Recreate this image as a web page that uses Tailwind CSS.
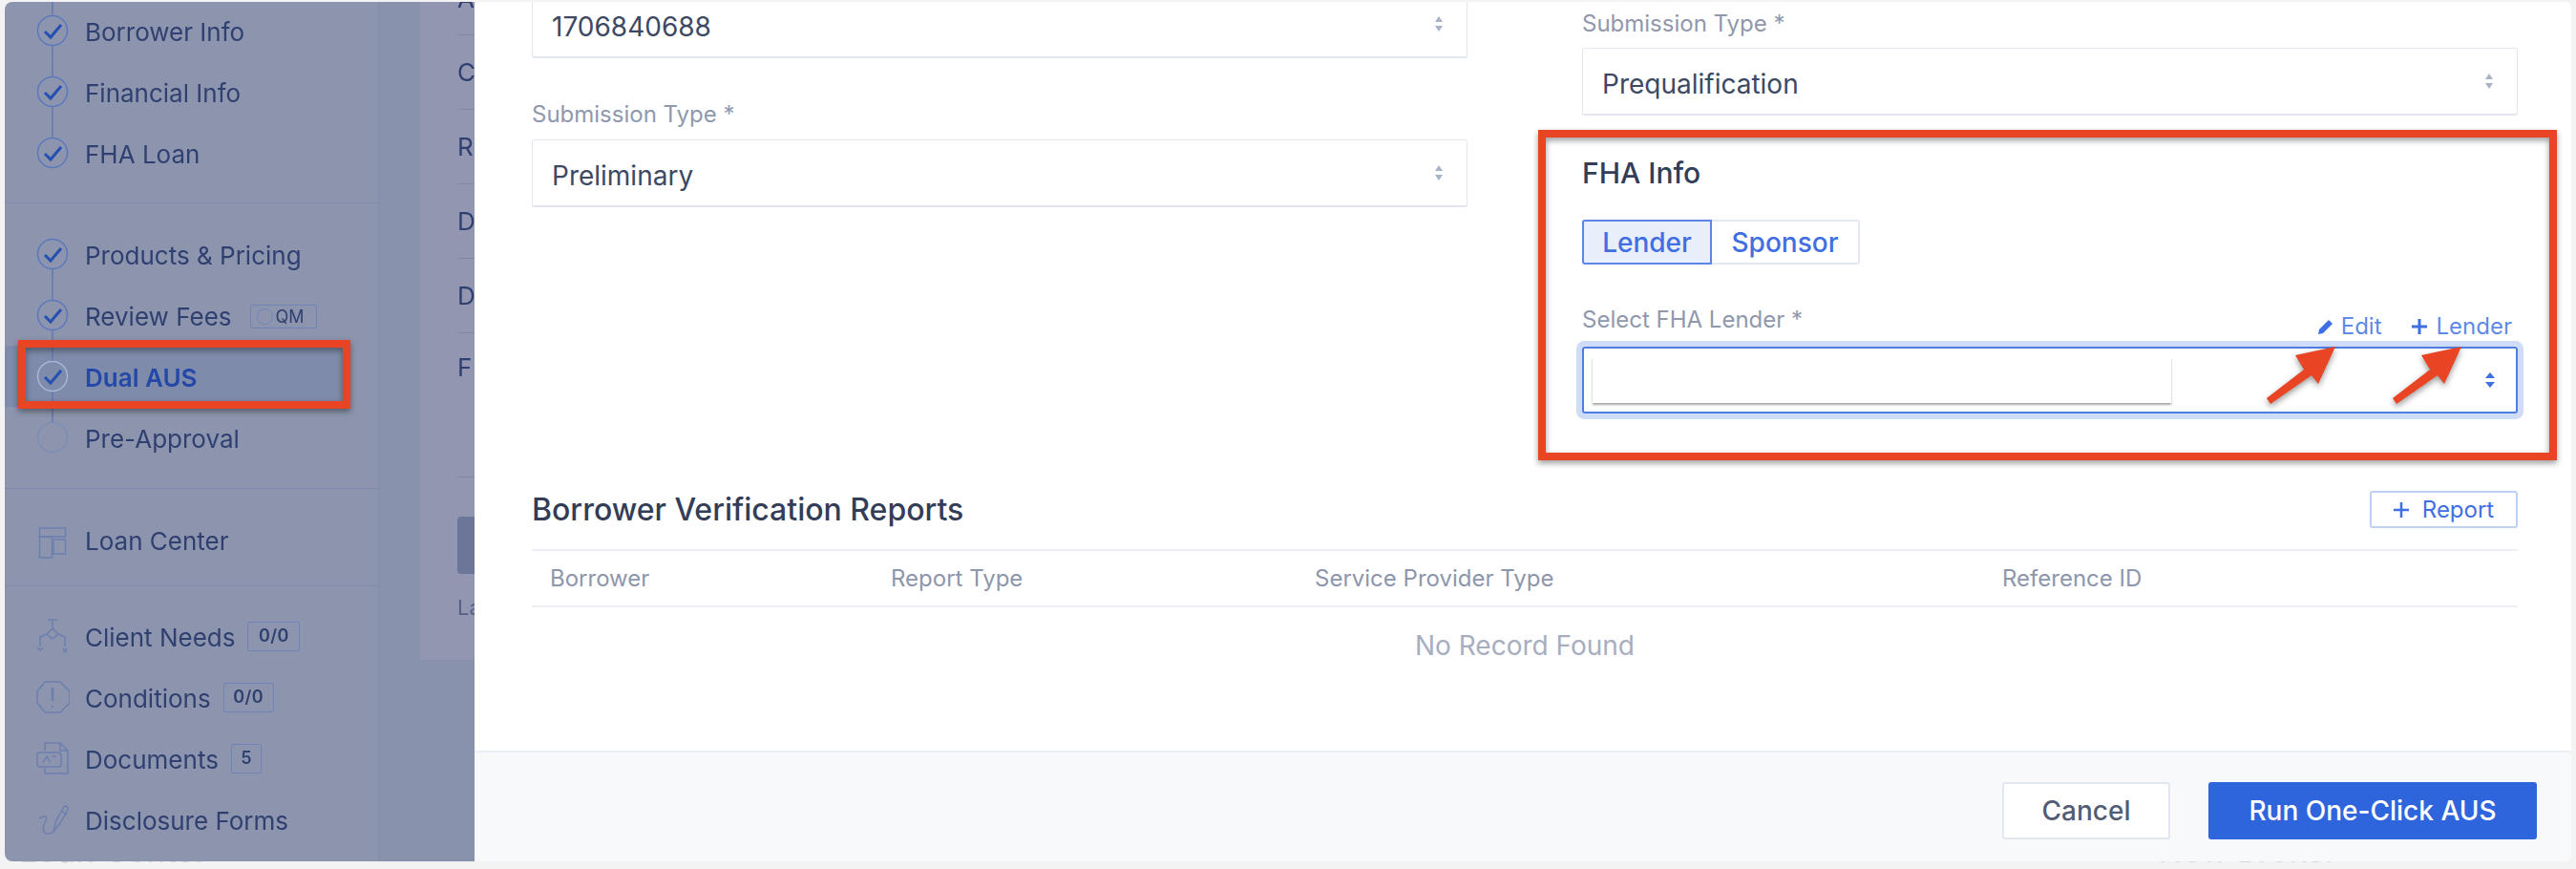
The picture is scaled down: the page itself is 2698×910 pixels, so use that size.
<!DOCTYPE html>
<html lang="en">
<head>
    <meta charset="UTF-8">
    <title>Dual AUS</title>
    <script src="https://cdn.jsdelivr.net/npm/@tailwindcss/browser@4"></script>
</head>
<body class="bg-[#f3f3f4] font-['Inter','Liberation_Sans',sans-serif]">
<div class="relative w-[2698px] h-[910px] overflow-hidden bg-[#f3f3f4]">

    <div class="flex h-[900px] mt-[2px] ml-[5px]">
        <!-- dimmed sidebar -->
        <aside class="w-[392px] shrink-0 h-[900px] overflow-hidden bg-[#8d95ae] border-r border-[#828dac] rounded-l-[8px] text-[#2f3f70] text-[26px]">
            <div class="blur-[0.4px] -mt-[2px]">
                <div class="pb-[20px] border-b border-[#7f8cae]">
                    <div class="flex items-center h-[64px]">
                        <svg class="ml-[32px] mr-[16px]" width="36" height="64" viewBox="0 0 36 64" fill="none"><path d="M18 0V16M18 48V64" stroke="#6379ad" stroke-width="1.5"/><circle cx="18" cy="32" r="15.5" stroke="#5b78bd" stroke-width="1.5"/><path d="M10 33l6 6 11-13" stroke="#2450b0" stroke-width="3"/></svg>
                        <span class="pt-[3px]">Borrower Info</span>
                    </div>
                    <div class="flex items-center h-[64px]">
                        <svg class="ml-[32px] mr-[16px]" width="36" height="64" viewBox="0 0 36 64" fill="none"><path d="M18 0V16M18 48V64" stroke="#6379ad" stroke-width="1.5"/><circle cx="18" cy="32" r="15.5" stroke="#5b78bd" stroke-width="1.5"/><path d="M10 33l6 6 11-13" stroke="#2450b0" stroke-width="3"/></svg>
                        <span class="pt-[3px]">Financial Info</span>
                    </div>
                    <div class="flex items-center h-[64px]">
                        <svg class="ml-[32px] mr-[16px]" width="36" height="64" viewBox="0 0 36 64" fill="none"><path d="M18 0V16" stroke="#6379ad" stroke-width="1.5"/><circle cx="18" cy="32" r="15.5" stroke="#5b78bd" stroke-width="1.5"/><path d="M10 33l6 6 11-13" stroke="#2450b0" stroke-width="3"/></svg>
                        <span class="pt-[3px]">FHA Loan</span>
                    </div>
                </div>

                <div class="pt-[21px] pb-[21px] border-b border-[#7f8cae]">
                    <div class="flex items-center h-[64px]">
                        <svg class="ml-[32px] mr-[16px]" width="36" height="64" viewBox="0 0 36 64" fill="none"><path d="M18 48V64" stroke="#6379ad" stroke-width="1.5"/><circle cx="18" cy="32" r="15.5" stroke="#5b78bd" stroke-width="1.5"/><path d="M10 33l6 6 11-13" stroke="#2450b0" stroke-width="3"/></svg>
                        <span class="pt-[3px]">Products &amp; Pricing</span>
                    </div>
                    <div class="flex items-center h-[64px]">
                        <svg class="ml-[32px] mr-[16px]" width="36" height="64" viewBox="0 0 36 64" fill="none"><path d="M18 0V16M18 48V64" stroke="#6379ad" stroke-width="1.5"/><circle cx="18" cy="32" r="15.5" stroke="#5b78bd" stroke-width="1.5"/><path d="M10 33l6 6 11-13" stroke="#2450b0" stroke-width="3"/></svg>
                        <span class="pt-[3px]">Review Fees</span>
                        <span class="ml-[19px] mt-[3px] flex items-center h-[25px] w-[70px] border border-[#6f84b6] rounded-[2px] pl-[6px] gap-[3px] text-[18px] leading-none">
                            <span class="w-[17px] h-[17px] shrink-0 rounded-full border border-[#6f84b6]"></span>QM
                        </span>
                    </div>
                    <div class="flex items-center h-[64px] w-[356px] bg-[#7f8bab] rounded-r-[10px] font-semibold text-[#2348a8]">
                        <svg class="ml-[32px] mr-[16px]" width="36" height="64" viewBox="0 0 36 64" fill="none"><path d="M18 0V16M18 48V64" stroke="#6379ad" stroke-width="1.5"/><circle cx="18" cy="32" r="15.5" stroke="#a9b6d8" stroke-width="1.5"/><path d="M10 33l6 6 11-13" stroke="#2450b0" stroke-width="3"/></svg>
                        <span class="pt-[3px]">Dual AUS</span>
                    </div>
                    <div class="flex items-center h-[64px]">
                        <svg class="ml-[32px] mr-[16px]" width="36" height="64" viewBox="0 0 36 64" fill="none"><path d="M18 0V16" stroke="#6379ad" stroke-width="1.5"/><circle cx="18" cy="32" r="15.5" stroke="#7c8db5" stroke-width="1.5"/></svg>
                        <span class="pt-[3px]">Pre-Approval</span>
                    </div>
                </div>

                <div class="pt-[21px] pb-[16px] border-b border-[#7f8cae]">
                    <div class="flex items-center h-[64px]">
                        <svg class="ml-[32px] mr-[16px]" width="36" height="64" viewBox="0 0 36 64" fill="none" stroke="#6c7fae" stroke-width="1.5"><rect x="4.5" y="20" width="27" height="9"/><rect x="4.5" y="29" width="13" height="22"/><rect x="19" y="32" width="12.5" height="15"/></svg>
                        <span class="pt-[3px]">Loan Center</span>
                    </div>
                </div>

                <div class="pt-[20px]">
                    <div class="flex items-center h-[64px]">
                        <svg class="ml-[32px] mr-[16px]" width="36" height="64" viewBox="0 0 36 64" fill="none" stroke="#6c7fae" stroke-width="1.5"><path d="M13 15h10M18 15v9M18 24l6 6-6 5-6-5zM12 30l-7 3v10M24 30l7 3v10M2 44l3 3 3-3M29 45l4 4M33 45l-4 4"/></svg>
                        <span class="pt-[3px]">Client Needs</span>
                        <span class="ml-[13px] flex items-center justify-center h-[31px] w-[55px] border border-[#6f84b6] rounded-[2px] text-[18px] font-semibold tracking-wide leading-none">0/0</span>
                    </div>
                    <div class="flex items-center h-[64px]">
                        <svg class="ml-[32px] mr-[16px]" width="36" height="64" viewBox="0 0 36 64" fill="none" stroke="#6c7fae" stroke-width="1.5"><path d="M10 16h16l10 10v12L26 48H10L2 38V26z"/><path d="M18 22v14M18 41v2" stroke-width="2.5"/></svg>
                        <span class="pt-[3px]">Conditions</span>
                        <span class="ml-[13px] flex items-center justify-center h-[31px] w-[53px] border border-[#6f84b6] rounded-[2px] text-[18px] font-semibold tracking-wide leading-none">0/0</span>
                    </div>
                    <div class="flex items-center h-[64px]">
                        <svg class="ml-[32px] mr-[16px]" width="36" height="64" viewBox="0 0 36 64" fill="none" stroke="#6c7fae" stroke-width="1.5"><path d="M10 24v-8h16l8 8v24H10v-6M26 16v8h8"/><rect x="2" y="26" width="25" height="15" rx="3"/><path d="M8 37l4-7 4 7M17 30h5"/></svg>
                        <span class="pt-[3px]">Documents</span>
                        <span class="ml-[13px] flex items-center justify-center h-[31px] w-[32px] border border-[#6f84b6] rounded-[2px] text-[18px] font-semibold leading-none">5</span>
                    </div>
                    <div class="flex items-center h-[64px]">
                        <svg class="ml-[32px] mr-[16px]" width="36" height="64" viewBox="0 0 36 64" fill="none" stroke="#6c7fae" stroke-width="1.5"><path d="M19 45l3-12 8-14c2-2 5 0 4 3l-8 14zM28 24l5 3"/><path d="M4 31c5-3 9-3 7 2-2 4-4 8-2 12 2 3 7 2 10 0"/></svg>
                        <span class="pt-[3px]">Disclosure Forms</span>
                    </div>
                </div>
            </div>
        </aside>

        <!-- strip with the page card behind the modal -->
        <div class="w-[100px] shrink-0 h-[900px] overflow-hidden bg-[#8992ad] pl-[43px] text-[#2f3f70] text-[26px]">
            <div class="h-[689px] bg-[#9296b0] pl-[39px] overflow-hidden blur-[0.4px]">
                <div class="-mt-[41px]">
                    <div class="h-[76px] flex items-center border-b border-[#8189a6]">A</div>
                    <div class="h-[78px] flex items-center border-b border-[#8189a6]">C</div>
                    <div class="h-[78px] flex items-center border-b border-[#8189a6]">R</div>
                    <div class="h-[78px] flex items-center border-b border-[#8189a6]">D</div>
                    <div class="h-[78px] flex items-center border-b border-[#8189a6]">D</div>
                    <div class="h-[151px] pt-[20px] leading-[32px] border-b border-[#8189a6]">F</div>
                </div>
                <div class="mt-[41px] h-[60px] bg-[#6b7699] rounded-l-[4px]"></div>
                <div class="mt-[21px] text-[22px] leading-[28px] text-[#56608a]">La</div>
            </div>
        </div>

        <!-- modal -->
        <main class="w-[2196px] h-[900px] bg-white rounded-[6px] flex flex-col overflow-hidden text-[#3d4963]">
            <div class="flex-1 pl-[60px] pr-[56px]">
                <div class="grid grid-cols-[980px_980px] gap-x-[120px] h-[431px]">
                    <div class="-mt-[12px]">
                        <div class="h-[71px] border border-[#e1e6f0] border-b-2 rounded-[3px] flex items-center justify-between pl-[20px] pr-[24px] text-[28px]">
                            <span class="pt-[6px]">1706840688</span>
                            <svg width="10" height="18" viewBox="0 0 10 18"><path d="M5 1l4 6H1zM5 17l4-6H1z" fill="#a9b3c8"/></svg>
                        </div>
                        <div class="mt-[44px] text-[24px] leading-[30px] text-[#8f98ad]">Submission Type *</div>
                        <div class="mt-[11px] h-[71px] border border-[#e1e6f0] border-b-2 rounded-[3px] flex items-center justify-between pl-[20px] pr-[24px] text-[28px]">
                            <span class="pt-[6px]">Preliminary</span>
                            <svg width="10" height="18" viewBox="0 0 10 18"><path d="M5 1l4 6H1zM5 17l4-6H1z" fill="#a9b3c8"/></svg>
                        </div>
                    </div>

                    <div class="pt-[8px]">
                        <div class="text-[24px] leading-[30px] text-[#8f98ad]">Submission Type *</div>
                        <div class="mt-[10px] h-[71px] border border-[#e1e6f0] border-b-2 rounded-[3px] flex items-center justify-between pl-[20px] pr-[24px] text-[28px]">
                            <span class="pt-[6px]">Prequalification</span>
                            <svg width="10" height="18" viewBox="0 0 10 18"><path d="M5 1l4 6H1zM5 17l4-6H1z" fill="#a9b3c8"/></svg>
                        </div>

                        <h3 class="mt-[42px] text-[30px] leading-[36px] font-medium text-[#333d57]">FHA Info</h3>
                        <div class="mt-[31px] flex h-[47px] text-[28px] font-medium text-[#3f6fe0]">
                            <div class="w-[136px] flex items-center justify-center bg-[#e9eefb] border-2 border-[#5b86e6] rounded-l-[3px]">Lender</div>
                            <div class="w-[155px] flex items-center justify-center border-2 border-l-0 border-[#e3e8f2] rounded-r-[3px]">Sponsor</div>
                        </div>

                        <div class="mt-[43px] flex justify-between items-end h-[30px]">
                            <span class="text-[24px] leading-[30px] text-[#8f98ad]">Select FHA Lender *</span>
                            <div class="flex items-center gap-[30px] pr-[6px] -mb-[5px] text-[24px] leading-[26px] text-[#5f8ae6]">
                                <span class="flex items-center gap-[7px]">
                                    <svg width="18" height="18" viewBox="0 0 18 18"><path d="M1 17l1-5L12 2l4 4L6 16z" fill="#3f6fe0"/></svg>Edit
                                </span>
                                <span class="flex items-center gap-[9px]">
                                    <svg width="18" height="18" viewBox="0 0 18 18"><path d="M9 1v16M1 9h16" stroke="#3f6fe0" stroke-width="3"/></svg>Lender
                                </span>
                            </div>
                        </div>
                        <div class="mt-[13px] h-[70px] border-2 border-[#4f7de4] rounded-[3px] ring-[6px] ring-[#cfdcf6] flex items-center justify-between pl-[9px] pr-[21px]">
                            <div class="w-[606px] h-[48px] bg-white shadow-[0_2px_2px_rgba(0,0,0,0.35)]"></div>
                            <svg width="12" height="18" viewBox="0 0 12 18"><path d="M6 1l5 6H1zM6 17l5-6H1z" fill="#3f6fe0"/></svg>
                        </div>
                    </div>
                </div>

                <div class="mt-[81px] flex items-center justify-between h-[39px]">
                    <h3 class="text-[32px] font-medium text-[#333d57]">Borrower Verification Reports</h3>
                    <button class="w-[155px] h-[39px] flex items-center justify-center gap-[14px] border-2 border-[#bdd0f5] rounded-[3px] text-[24px] text-[#3f6fe0]">
                        <svg width="16" height="16" viewBox="0 0 16 16"><path d="M8 0v16M0 8h16" stroke="#3f6fe0" stroke-width="2.5"/></svg>Report
                    </button>
                </div>
                <div class="mt-[22px] h-[61px] border-y-2 border-y-[#eceff6] grid grid-cols-[357px_444px_720px_1fr] items-center pl-[19px] text-[24px] text-[#8d96ab]">
                    <span>Borrower</span>
                    <span>Report Type</span>
                    <span>Service Provider Type</span>
                    <span>Reference ID</span>
                </div>
                <div class="h-[80px] flex items-center justify-center text-[28px] text-[#a7aec0]">No Record Found</div>
            </div>
            <footer class="h-[116px] shrink-0 bg-[#f8f9fb] border-t-2 border-[#eceff6] flex items-center justify-end gap-[40px] pr-[36px] pt-[8px]">
                <button class="w-[176px] h-[60px] bg-white border-2 border-[#e1e6f0] rounded-[3px] text-[28px] font-medium text-[#525d75]">Cancel</button>
                <button class="w-[344px] h-[60px] bg-[#2f65dc] rounded-[3px] text-[28px] font-medium text-white">Run One-Click AUS</button>
            </footer>
        </main>
    </div>

    <!-- what is left of the page under the dialog -->
    <div class="h-[8px] overflow-hidden flex justify-between pl-[20px] pr-[250px] text-[34px] leading-[34px] text-[#d5d7db]">
        <span class="-mt-[28px]">Loan Center</span>
        <span class="-mt-[28px]">New Broker</span>
    </div>

    <!-- red annotations on top of the screenshot -->
    <svg class="absolute left-0 top-0 drop-shadow-[0_3px_3px_rgba(0,0,0,0.4)]" width="2698" height="910" viewBox="0 0 2698 910" fill="none">
        <rect x="23" y="360" width="340" height="64" stroke="#e94424" stroke-width="8"/>
        <rect x="1615" y="140" width="1059" height="338" stroke="#e94424" stroke-width="8"/>
        <polygon points="2446,363 2428,402 2421,393 2378,423 2374,417 2413,387 2404,372" fill="#e94424"/>
        <polygon points="2578,363 2560,402 2553,393 2510,423 2506,417 2545,387 2536,372" fill="#e94424"/>
    </svg>
</div>
</body>
</html>
